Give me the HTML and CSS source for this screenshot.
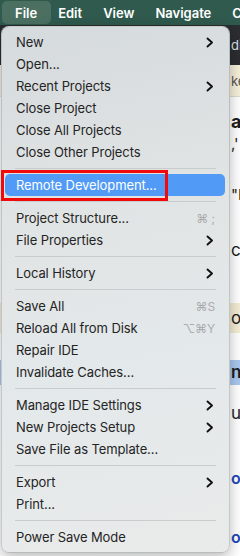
FILE: index.html
```html
<!DOCTYPE html>
<html lang="en">
<head>
    <meta charset="UTF-8">
    <meta name="viewport" content="width=device-width,initial-scale=1.0">
    <title>File menu</title>
    <link rel="stylesheet" href="styles.css">
</head>
<body>
    <header class="menubar">
        <span class="menubar-item active">File</span>
        <span class="menubar-item">Edit</span>
        <span class="menubar-item">View</span>
        <span class="menubar-item">Navigate</span>
        <span class="menubar-item">Code</span>
    </header>
    <div class="workspace">
        <!-- Editor behind the open menu -->
        <div class="editor">
            <div class="tabs"><span>ding.md</span></div>
            <div class="crumbs"><span>ke</span></div>
            <div class="ln title">at</div>
            <div class="ln">,'</div>
            <div class="ln l-p">"P</div>
            <div class="ln l-ce">ce</div>
            <div class="ln note">om</div>
            <div class="ln sel">nt</div>
            <div class="ln l-ur">ur</div>
            <div class="ln link l-o1">oT</div>
            <div class="ln link l-o2">oT</div>
        </div>

        <nav class="menu" id="menu"></nav>
    </div>
    <script>
        // Menu data: "-" is a separator, sub = has submenu, key = shortcut
        const items = [
            { label: "New", sub: true },
            { label: "Open..." },
            { label: "Recent Projects", sub: true },
            { label: "Close Project" },
            { label: "Close All Projects" },
            { label: "Close Other Projects" },
            "-",
            { label: "Remote Development...", active: true },
            "-",
            { label: "Project Structure...", key: "⌘ ;" },
            { label: "File Properties", sub: true },
            "-",
            { label: "Local History", sub: true },
            "-",
            { label: "Save All", key: "⌘S" },
            { label: "Reload All from Disk", key: "⌥⌘Y" },
            { label: "Repair IDE" },
            { label: "Invalidate Caches..." },
            "-",
            { label: "Manage IDE Settings", sub: true },
            { label: "New Projects Setup", sub: true },
            { label: "Save File as Template..." },
            "-",
            { label: "Export", sub: true },
            { label: "Print..." },
            "-",
            { label: "Power Save Mode" }
        ];
        const chevron = '<svg class="chevron" width="8" height="11" viewBox="0 0 8 11"><path d="M1.5 1.5l4.5 4-4.5 4" fill="none" stroke="#111" stroke-width="1.9" stroke-linecap="round" stroke-linejoin="round"/></svg>';
        const menu = document.getElementById('menu');
        items.forEach(it => {
            const row = document.createElement('div');
            if (it === "-") {
                row.className = 'sep';
            } else {
                row.className = 'item' + (it.active ? ' active' : '');
                row.innerHTML = `<span class="label">${it.label}</span>` +
                    (it.key ? `<span class="key">${it.key}</span>` : '') +
                    (it.sub ? chevron : '') +
                    (it.active ? '<span class="callout"></span>' : '');
            }
            menu.appendChild(row);
        });
    </script>
</body>
</html>
```

FILE: styles.css
```css
:root {
    --bar-green: #2f5a4d;
    --bar-pill: #4b7062;
    --menu-text: #242424;
    --menu-key: #a9abad;
    --menu-line: #c9cccd;
    --select-blue: #519bf6;
    --callout-red: #f20a0a;
}
html, body {
    margin: 0;
    padding: 0;
    width: 240px;
    height: 556px;
    overflow: hidden;
    font-family: 'Inter', 'Noto Sans', sans-serif;
    background: #fff;
}
.menubar {
    display: flex;
    align-items: center;
    height: 25px;
    padding-left: 2px;
    background: var(--bar-green);
    white-space: nowrap;
}
.menubar-item {
    display: flex;
    align-items: center;
    height: 23px;
    padding: 0 14px 0 7px;
    color: #fff;
    font-size: 13px;
    font-weight: 600;
}
.menubar-item.active {
    padding-left: 13px;
    background: var(--bar-pill);
    border-radius: 5px;
}
.workspace {
    position: relative;
    height: 531px;
}
/* Editor behind the menu */
.editor {
    height: 100%;
    white-space: nowrap;
    overflow: hidden;
}
.tabs {
    display: flex;
    align-items: center;
    height: 40px;
    padding-left: 231px;
    background: #2b2d31;
    color: #dfe1e5;
    font-size: 13px;
}
.crumbs {
    display: flex;
    align-items: center;
    height: 31px;
    padding-left: 231px;
    background: #f6efd9;
    border-bottom: 1px solid #dedbd0;
    color: #555;
    font-size: 13px;
}
.ln {
    height: 22px;
    line-height: 22px;
    padding-left: 231px;
    color: #1d1d1d;
    font-size: 15px;
}
.ln.title {
    margin-top: 14px;
    font-size: 18px;
    font-weight: 700;
}
.l-p { margin-top: 29px; }
.l-ce { margin-top: 33px; font-size: 17px; }
.ln.note {
    margin-top: 42px;
    height: 30px;
    line-height: 30px;
    background: #f4ecd4;
    font-size: 17px;
}
.ln.sel {
    margin-top: 27px;
    height: 25px;
    line-height: 25px;
    background: #a9c7ef;
    font-size: 17px;
    font-weight: 600;
}
.l-ur { margin-top: 17px; font-size: 17px; }
.ln.link {
    color: #1f47b8;
    font-size: 16px;
    font-weight: 600;
}
.l-o1 { margin-top: 43px; }
.l-o2 { margin-top: 37px; }
/* Dropdown */
.menu {
    position: absolute;
    top: 1px;
    left: 1px;
    width: 229px;
    padding: 4px 0;
    box-sizing: border-box;
    background: linear-gradient(168deg, #d5dadd 0%, #e1e4e4 35%, #e3e8ea 62%, #e9ebea 100%);
    border: 1px solid rgba(0,0,0,0.14);
    border-radius: 8px;
    box-shadow: 0 4px 14px rgba(0,0,0,0.28);
}
.item {
    position: relative;
    display: flex;
    align-items: center;
    height: 22px;
    margin: 0 4px 0 3px;
    padding: 0 10px 0 11px;
    color: var(--menu-text);
    font-size: 13px;
    letter-spacing: -0.1px;
    white-space: nowrap;
}
.item .label {
    flex: 1;
}
.item.active {
    background: var(--select-blue);
    border-radius: 5px;
    color: #fff;
}
.key {
    color: var(--menu-key);
    font-size: 12px;
}
.chevron {
    margin-right: 1px;
}
.sep {
    height: 11px;
    margin: 0 13px;
    background: linear-gradient(var(--menu-line), var(--menu-line)) center / 100% 1px no-repeat;
}
/* Red annotation box around the selected item */
.callout {
    position: absolute;
    top: -4px;
    left: -4px;
    width: 167px;
    height: 31px;
    box-sizing: border-box;
    border: 3px solid var(--callout-red);
}
```
